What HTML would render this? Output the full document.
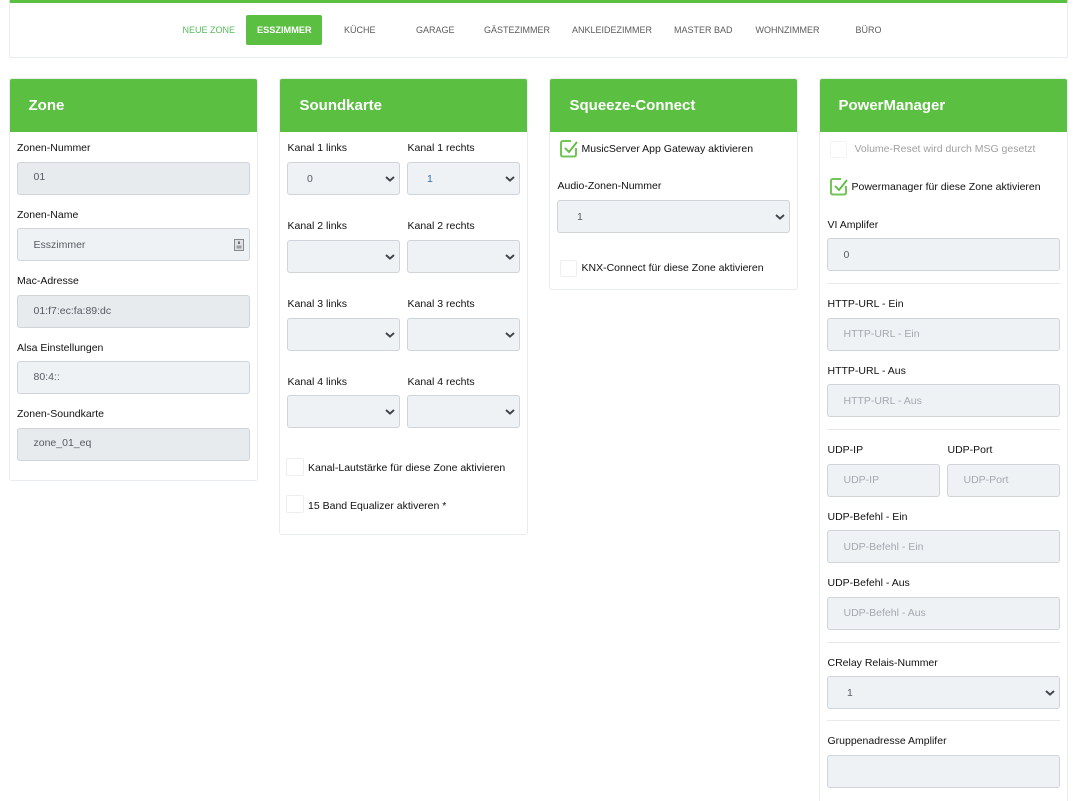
<!DOCTYPE html>
<html lang="de"><head><meta charset="utf-8"><title>Zone</title>
<style>
html,body{margin:0;padding:0;background:#fff;width:1080px;height:801px;overflow:hidden}
body{font-family:"Liberation Sans",sans-serif}
div,svg{position:absolute;box-sizing:border-box}
#w{left:0;top:0;width:1080px;height:801px;overflow:hidden;background:#fff}
.card{background:#fff;border:1px solid #e9ecef;border-radius:3px}
.hd{background:#5bbf42;color:#fff;font-weight:bold;font-size:15px;height:53px;line-height:53px;top:79px;width:247px;border-radius:2px 2px 0 0}
.l{font-size:10.5px;line-height:14px;color:#111;white-space:nowrap}
.n{font-size:9px;line-height:14px;color:#5b5b5b;top:23px;white-space:nowrap}
.i{background:#eff2f5;border:1px solid #cfd4da;border-radius:3px;height:33px;font-size:10.5px;line-height:31px;padding-left:15.5px;color:#555c63;white-space:nowrap}
.d{background:#e8ebee}
.p{color:#a3a9b0}
.s{height:32.5px;line-height:33px}
.hr{height:1px;background:#e7e9ec;left:827px;width:233px}
.b{width:18px;height:18px;background:#fff;border:1px solid #eceef0;border-radius:2px}
.i svg{right:4px;top:12.5px}
</style></head><body>
<svg width="0" height="0" style="display:none"><defs>
<symbol id="c" viewBox="0 0 10 6"><path d="M1 1L5 4.600L9 1" fill="none" stroke="#3f454b" stroke-width="1.900"/></symbol>
<symbol id="k" viewBox="0 0 19 19"><path d="M12 2H4Q2 2 2 4V15.500Q2 17.500 4 17.500H15Q17 17.500 17 15.500V9" fill="none" stroke="#74c558" stroke-width="2"/><path d="M6 9L10 13L18 3" fill="none" stroke="#5bbf42" stroke-width="1.900"/></symbol>
</defs></svg>
<div id="w">
<div style="left:9px;top:0;width:1059px;height:58px;background:#fff;border:1px solid #e9ecef;border-top:3px solid #5bbf42;border-radius:2px"></div>
<div class="n" style="left:182.500px;color:#55bb5c;top:23px">NEUE ZONE</div>
<div style="left:246px;top:15px;width:76px;height:30px;background:#5bbf42;border-radius:2px"></div>
<div class="n" style="left:257px;color:#fff;font-weight:bold;font-size:9.200px">ESSZIMMER</div>
<div class="n" style="left:344px">KÜCHE</div>
<div class="n" style="left:416px">GARAGE</div>
<div class="n" style="left:484px">GÄSTEZIMMER</div>
<div class="n" style="left:572px">ANKLEIDEZIMMER</div>
<div class="n" style="left:674px">MASTER BAD</div>
<div class="n" style="left:755.500px">WOHNZIMMER</div>
<div class="n" style="left:855.500px">BÜRO</div>

<div class="card" style="left:9px;top:78px;width:249px;height:403px"></div>
<div class="card" style="left:279px;top:78px;width:249px;height:457px"></div>
<div class="card" style="left:549px;top:78px;width:249px;height:212px"></div>
<div class="card" style="left:819px;top:78px;width:249px;height:741px"></div>
<div class="hd" style="left:10px;padding-left:18.500px">Zone</div>
<div class="hd" style="left:280px;padding-left:19.500px">Soundkarte</div>
<div class="hd" style="left:550px;padding-left:19.500px">Squeeze-Connect</div>
<div class="hd" style="left:820px;padding-left:18.500px">PowerManager</div>

<!-- Zone -->
<div class="l" style="left:17px;top:141px">Zonen-Nummer</div>
<div class="i d" style="left:17px;top:162px;width:233px;line-height:29px">01</div>
<div class="l" style="left:17px;top:208px">Zonen-Name</div>
<div class="i" style="left:17px;top:228px;width:233px;line-height:33px">Esszimmer<svg width="10" height="12" viewBox="0 0 10 12" style="right:5px;top:10px"><rect x=".5" y=".5" width="9" height="11" fill="#dfe1e3" stroke="#85898d"/><rect x="4" y="2.500" width="2" height="2.500" fill="#6e7276"/><rect x="2.500" y="6.500" width="5" height="3" fill="#9a9ea2"/></svg></div>
<div class="l" style="left:17px;top:274px">Mac-Adresse</div>
<div class="i d" style="left:17px;top:295px;width:233px">01:f7:ec:fa:89:dc</div>
<div class="l" style="left:17px;top:341px">Alsa Einstellungen</div>
<div class="i" style="left:17px;top:361px;width:233px">80:4::</div>
<div class="l" style="left:17px;top:407px">Zonen-Soundkarte</div>
<div class="i d" style="left:17px;top:428px;width:233px;line-height:29px">zone_01_eq</div>

<!-- Soundkarte -->
<div class="l" style="left:287.500px;top:141px">Kanal 1 links</div>
<div class="l" style="left:407.500px;top:141px">Kanal 1 rechts</div>
<div class="i s" style="left:287px;top:162px;width:113px;padding-left:19px">0<svg width="10" height="6"><use href="#c"/></svg></div>
<div class="i s" style="left:407px;top:162px;width:113px;padding-left:19px;color:#2f6fa8">1<svg width="10" height="6"><use href="#c"/></svg></div>
<div class="l" style="left:287.500px;top:219px">Kanal 2 links</div>
<div class="l" style="left:407.500px;top:219px">Kanal 2 rechts</div>
<div class="i s" style="left:287px;top:240px;width:113px"><svg width="10" height="6"><use href="#c"/></svg></div>
<div class="i s" style="left:407px;top:240px;width:113px"><svg width="10" height="6"><use href="#c"/></svg></div>
<div class="l" style="left:287.500px;top:297px">Kanal 3 links</div>
<div class="l" style="left:407.500px;top:297px">Kanal 3 rechts</div>
<div class="i s" style="left:287px;top:318px;width:113px"><svg width="10" height="6"><use href="#c"/></svg></div>
<div class="i s" style="left:407px;top:318px;width:113px"><svg width="10" height="6"><use href="#c"/></svg></div>
<div class="l" style="left:287.500px;top:375px">Kanal 4 links</div>
<div class="l" style="left:407.500px;top:375px">Kanal 4 rechts</div>
<div class="i s" style="left:287px;top:395px;width:113px"><svg width="10" height="6"><use href="#c"/></svg></div>
<div class="i s" style="left:407px;top:395px;width:113px"><svg width="10" height="6"><use href="#c"/></svg></div>
<div class="b" style="left:286px;top:458px"></div>
<div class="l" style="left:308px;top:461px">Kanal-Lautstärke für diese Zone aktivieren</div>
<div class="b" style="left:286px;top:495px"></div>
<div class="l" style="left:308px;top:499px">15 Band Equalizer aktiveren *</div>

<!-- Squeeze -->
<svg style="left:559px;top:139px" width="19" height="19"><use href="#k"/></svg>
<div class="l" style="left:581.500px;top:142px">MusicServer App Gateway aktivieren</div>
<div class="l" style="left:557.500px;top:179px">Audio-Zonen-Nummer</div>
<div class="i s" style="left:557px;top:200px;width:233px;padding-left:19px">1<svg width="10" height="6"><use href="#c"/></svg></div>
<div class="b" style="left:560px;top:260px;width:17px;height:17px"></div>
<div class="l" style="left:581.500px;top:261px">KNX-Connect für diese Zone aktivieren</div>

<!-- PowerManager -->
<div class="b" style="left:830px;top:141px;width:17px;height:17px;border-color:#f2f3f5"></div>
<div class="l" style="left:854.500px;top:142px;color:#a0a0a0">Volume-Reset wird durch MSG gesetzt</div>
<svg style="left:829px;top:177px" width="19" height="19"><use href="#k"/></svg>
<div class="l" style="left:851.500px;top:180px">Powermanager für diese Zone aktivieren</div>
<div class="l" style="left:827.500px;top:218px">VI Amplifer</div>
<div class="i" style="left:827px;top:238px;width:233px;line-height:33px">0</div>
<div class="hr" style="top:283px"></div>
<div class="l" style="left:827.500px;top:297px">HTTP-URL - Ein</div>
<div class="i p" style="left:827px;top:318px;width:233px">HTTP-URL - Ein</div>
<div class="l" style="left:827.500px;top:364px">HTTP-URL - Aus</div>
<div class="i p" style="left:827px;top:384px;width:233px;line-height:33px">HTTP-URL - Aus</div>
<div class="hr" style="top:429px"></div>
<div class="l" style="left:827.500px;top:443px">UDP-IP</div>
<div class="l" style="left:947.500px;top:443px">UDP-Port</div>
<div class="i p" style="left:827px;top:464px;width:113px">UDP-IP</div>
<div class="i p" style="left:947px;top:464px;width:113px">UDP-Port</div>
<div class="l" style="left:827.500px;top:510px">UDP-Befehl - Ein</div>
<div class="i p" style="left:827px;top:530px;width:233px;line-height:33px">UDP-Befehl - Ein</div>
<div class="l" style="left:827.500px;top:576px">UDP-Befehl - Aus</div>
<div class="i p" style="left:827px;top:597px;width:233px">UDP-Befehl - Aus</div>
<div class="hr" style="top:642px"></div>
<div class="l" style="left:827.500px;top:656px">CRelay Relais-Nummer</div>
<div class="i s" style="left:827px;top:676px;width:233px;padding-left:19px">1<svg width="10" height="6"><use href="#c"/></svg></div>
<div class="hr" style="top:720px"></div>
<div class="l" style="left:827.500px;top:734px">Gruppenadresse Amplifer</div>
<div class="i" style="left:827px;top:755px;width:233px"></div>
</div>
</body></html>
